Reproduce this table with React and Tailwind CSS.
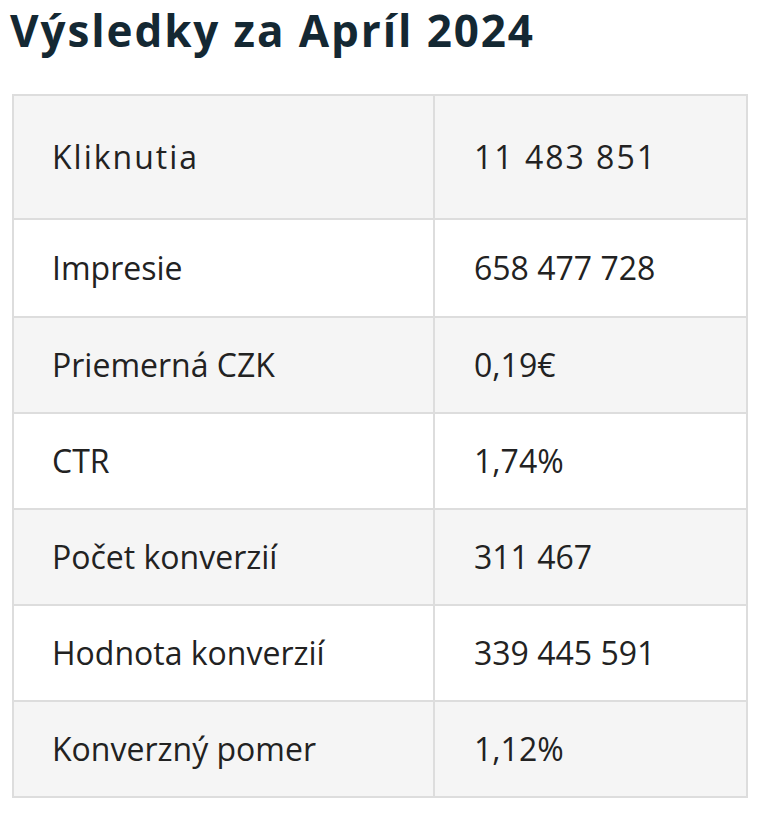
const rows = [
  ["Kliknutia", "11 483 851"],
  ["Impresie", "658 477 728"],
  ["Priemerná CZK", "0,19€"],
  ["CTR", "1,74%"],
  ["Počet konverzií", "311 467"],
  ["Hodnota konverzií", "339 445 591"],
  ["Konverzný pomer", "1,12%"],
];

export default function App() {
  return (
    <div className="w-[760px] min-h-[814px] bg-white px-[12px] pt-[4px] font-['Open_Sans',sans-serif]">
      <h1 className="text-[44px] leading-[52px] font-bold tracking-[1.9px] text-[#142833] -ml-[2px] mb-[38px]">
        Výsledky za Apríl 2024
      </h1>
      <table className="w-[736px] border-collapse border-2 border-[#dddddd] text-[32px] text-[#222222]">
        <tbody>
          {rows.map(([label, value], i) => {
            const pad = i === 0 ? "py-[37px] tracking-[2px]" : i === 1 ? "py-[24px]" : "py-[23px]";
            return (
              <tr key={label} className={i % 2 === 0 ? "bg-[#f5f5f5]" : "bg-white"}>
                <td className={"w-[421px] border-2 border-[#dddddd] pl-[38px] pr-4 leading-[48px] " + pad}>
                  {label}
                </td>
                <td className={"border-2 border-[#dddddd] pl-[39px] pr-4 leading-[48px] " + pad}>
                  {value}
                </td>
              </tr>
            );
          })}
        </tbody>
      </table>
    </div>
  );
}
